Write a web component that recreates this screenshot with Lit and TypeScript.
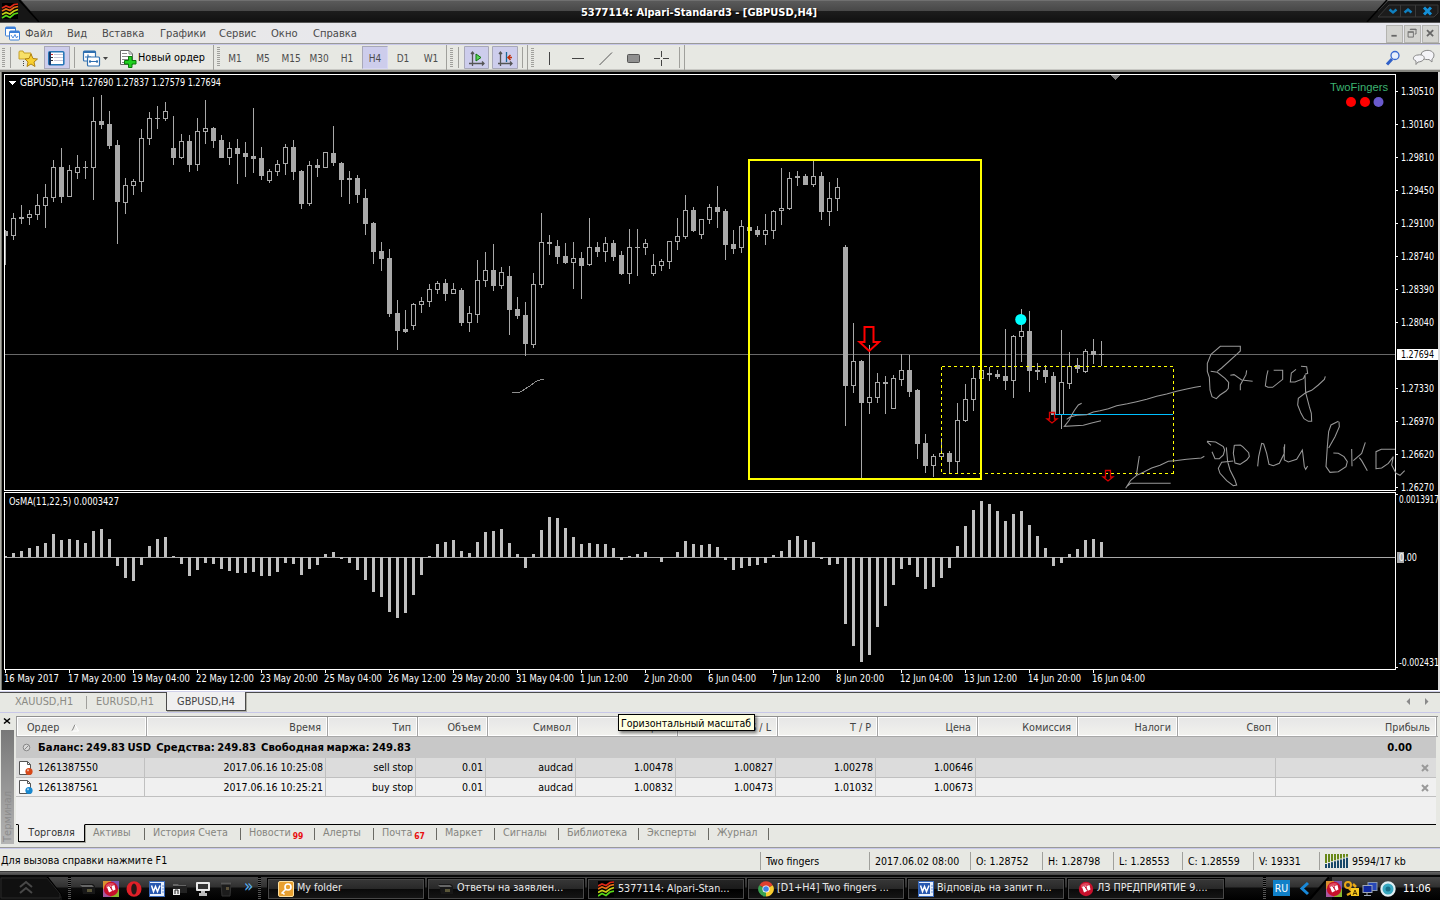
import { LitElement, html, svg, css } from 'lit';
import { customElement } from 'lit/decorators.js';
import { classMap } from 'lit/directives/class-map.js';
import { styleMap } from 'lit/directives/style-map.js';

// [high, low, body top, body bottom, filled]
const CANDLES: number[][] = [
  [230, 265, 231, 236, 1], [213, 240, 218, 236, 0], [205, 224, 217, 219, 1], [210, 225, 214, 218, 0],
  [194, 220, 205, 215, 0], [184, 228, 197, 206, 0], [160, 202, 167, 198, 0], [148, 203, 167, 197, 1],
  [165, 197, 170, 197, 0], [155, 179, 167, 173, 0], [161, 179, 167, 168, 1], [97, 200, 121, 168, 0],
  [95, 129, 121, 125, 1], [111, 149, 124, 146, 1], [140, 244, 145, 202, 1], [178, 214, 185, 203, 0],
  [179, 195, 181, 186, 0], [129, 192, 138, 182, 0], [112, 145, 118, 139, 0], [106, 129, 118, 119, 1],
  [102, 121, 111, 119, 0], [116, 165, 148, 158, 1], [134, 159, 141, 158, 0], [135, 172, 141, 165, 1],
  [118, 171, 131, 165, 0], [100, 144, 128, 132, 0], [127, 148, 128, 141, 1], [135, 158, 140, 158, 1],
  [142, 165, 148, 158, 0], [139, 184, 148, 154, 1], [142, 177, 153, 157, 1], [108, 173, 156, 159, 1],
  [147, 180, 158, 176, 1], [169, 183, 171, 181, 0], [160, 176, 164, 172, 0], [144, 175, 147, 164, 0],
  [140, 180, 147, 172, 1], [170, 209, 171, 204, 1], [161, 206, 165, 204, 0], [159, 177, 165, 168, 1],
  [152, 168, 152, 168, 0], [126, 166, 153, 163, 1], [162, 197, 163, 180, 1], [171, 204, 178, 180, 1],
  [175, 203, 178, 195, 1], [189, 235, 198, 224, 1], [222, 264, 223, 252, 1], [242, 271, 251, 259, 1],
  [249, 317, 258, 314, 1], [300, 350, 313, 331, 1], [310, 333, 329, 332, 1], [303, 330, 304, 326, 0],
  [297, 313, 301, 305, 0], [284, 307, 289, 302, 0], [281, 294, 283, 290, 0], [279, 301, 283, 294, 1],
  [283, 294, 289, 294, 0], [288, 326, 290, 323, 1], [306, 332, 313, 323, 0], [260, 323, 280, 315, 0],
  [252, 287, 270, 281, 0], [244, 291, 270, 286, 1], [267, 289, 272, 286, 0], [266, 335, 276, 310, 1],
  [297, 319, 309, 316, 1], [302, 356, 315, 344, 1], [273, 348, 284, 345, 0], [213, 288, 242, 285, 0],
  [235, 255, 242, 244, 1], [240, 264, 246, 257, 1], [243, 264, 256, 263, 1], [242, 289, 258, 263, 0],
  [252, 299, 258, 266, 1], [218, 266, 247, 265, 0], [242, 257, 247, 252, 1], [237, 262, 243, 252, 0],
  [240, 261, 243, 257, 1], [251, 275, 255, 274, 1], [229, 284, 247, 274, 0], [229, 276, 247, 248, 1],
  [239, 255, 243, 248, 0], [254, 276, 265, 274, 0], [259, 271, 261, 266, 0], [241, 269, 241, 262, 0],
  [218, 250, 236, 242, 0], [195, 239, 210, 237, 0], [207, 232, 210, 231, 1], [219, 239, 219, 235, 0],
  [204, 224, 207, 220, 0], [186, 228, 207, 212, 1], [209, 260, 211, 245, 1], [230, 254, 244, 249, 1],
  [220, 253, 226, 248, 0], [227, 231, 227, 231, 1], [226, 237, 230, 235, 1], [214, 245, 230, 235, 0],
  [210, 239, 211, 231, 0], [168, 225, 208, 211, 0], [172, 210, 178, 209, 0], [171, 186, 176, 178, 1],
  [174, 185, 176, 185, 1], [161, 187, 176, 185, 0], [172, 220, 176, 212, 1], [182, 226, 198, 212, 0],
  [178, 211, 187, 199, 0], [245, 426, 247, 386, 1], [323, 393, 361, 386, 0], [360, 478, 361, 403, 1],
  [345, 414, 397, 403, 0], [373, 403, 382, 398, 0], [376, 414, 382, 384, 1], [375, 409, 378, 409, 0],
  [354, 386, 370, 380, 0], [355, 397, 370, 392, 1], [389, 459, 390, 444, 1], [434, 473, 443, 466, 1],
  [454, 477, 456, 466, 0], [438, 460, 453, 457, 0], [451, 473, 453, 462, 1], [403, 474, 420, 462, 0],
  [384, 422, 399, 421, 0], [367, 411, 378, 400, 0], [370, 379, 370, 379, 0], [367, 381, 373, 375, 1],
  [370, 379, 374, 377, 1], [329, 390, 376, 381, 1], [335, 398, 336, 381, 0], [309, 362, 331, 337, 0],
  [311, 392, 331, 371, 1], [363, 380, 370, 372, 1], [365, 383, 370, 377, 1], [372, 415, 376, 415, 1],
  [330, 429, 382, 415, 0], [352, 389, 366, 384, 0], [358, 373, 365, 369, 1], [349, 373, 351, 372, 0],
  [339, 364, 351, 355, 1], [341, 366, 354, 355, 1],
];

// outer edge of every histogram bar, the zero line is at 557
const OSMA = [
  556, 553, 551, 548, 546, 543, 534, 540, 539, 540, 543, 531, 529, 539, 566, 578, 581, 565, 546, 539,
  537, 556, 564, 576, 570, 563, 564, 569, 571, 573, 573, 572, 576, 576, 572, 563, 564, 575, 569, 565,
  554, 552, 559, 563, 570, 580, 592, 597, 612, 618, 613, 595, 575, 556, 544, 542, 540, 551, 553, 542,
  532, 531, 529, 543, 554, 568, 554, 530, 517, 518, 528, 537, 544, 543, 544, 544, 548, 560, 556, 554,
  552, 557, 562, 557, 552, 541, 544, 545, 544, 547, 560, 570, 568, 566, 565, 563, 555, 551, 540, 536,
  540, 542, 559, 565, 564, 624, 646, 662, 655, 627, 606, 585, 569, 565, 577, 589, 587, 578, 568, 546,
  526, 510, 501, 504, 511, 521, 514, 511, 525, 536, 548, 566, 563, 554, 549, 540, 539, 542,
];

const PRICES: [string, number][] = [
  ['1.30510', 91], ['1.30160', 124], ['1.29810', 157], ['1.29450', 190], ['1.29100', 223],
  ['1.28740', 256], ['1.28390', 289], ['1.28040', 322], ['1.27330', 388], ['1.26970', 421],
  ['1.26620', 454], ['1.26270', 487],
];

const DATES: [string, number][] = [
  ['16 May 2017', 55], ['17 May 20:00', 58], ['19 May 04:00', 58], ['22 May 12:00', 58],
  ['23 May 20:00', 58], ['25 May 04:00', 58], ['26 May 12:00', 58], ['29 May 20:00', 58],
  ['31 May 04:00', 58], ['1 Jun 12:00', 48], ['2 Jun 20:00', 48], ['6 Jun 04:00', 48],
  ['7 Jun 12:00', 48], ['8 Jun 20:00', 48], ['12 Jun 04:00', 53], ['13 Jun 12:00', 53],
  ['14 Jun 20:00', 53], ['16 Jun 04:00', 53],
];

const label = (x: number, y: number, width: number, text: string, cls = '') => svg`
  <text class="label ${cls}" x=${x} y=${y} textLength=${width} lengthAdjust="spacingAndGlyphs">${text}</text>
`;

@customElement('price-chart')
export class PriceChart extends LitElement {
  static styles = css`
    :host {
      display: block;
      height: 618px;
      background: #000;
    }
    svg {
      display: block;
    }
    .label {
      font-family: 'DejaVu Sans Condensed', 'DejaVu Sans', sans-serif;
      font-stretch: condensed;
      font-size: 9.8px;
      fill: #fff;
    }
    .label.dark {
      fill: #000;
    }
    .label.name {
      font-family: 'Liberation Sans', Arial, sans-serif;
      font-size: 11.5px;
      fill: #3cb371;
    }
    .crisp {
      shape-rendering: crispEdges;
    }
    .ink {
      fill: none;
      stroke: #989898;
      stroke-width: 3.2;
      shape-rendering: geometricPrecision;
    }
  `;

  private candle([high, low, top, bottom, filled]: number[], i: number) {
    const x = 5 + i * 8;
    const left = i === 0 ? x : x - 2;
    return svg`
      <rect x=${x} y=${high} width="1" height=${low - high} fill="#a9a9a9" />
      <rect x=${left} y=${top} width=${x + 3 - left} height=${bottom - top} fill="#a9a9a9" />
      ${filled ? '' : svg`<rect x=${x - 1} y=${top + 1} width="3" height=${bottom - top - 2} fill="#000" />`}
    `;
  }

  private bar(edge: number, i: number) {
    return svg`<rect x=${i === 0 ? 5 : 4 + i * 8} y=${Math.min(edge, 557)} width=${i === 0 ? 2 : 3}
      height=${Math.abs(edge - 557)} fill="#c0c0c0" />`;
  }

  render() {
    return html`
      <svg width="1440" height="618" viewBox="0 72 1440 618">
        <g class="crisp">
          <rect x="0" y="72" width="1" height="618" fill="#b0b0a8" />
          <rect x="1" y="72" width="1" height="618" fill="#77776f" />
          <rect x="1438" y="72" width="2" height="618" fill="#dcdcdc" />
          <rect x="5" y="354" width="1391" height="1" fill="#696969" />
          ${CANDLES.map((c, i) => this.candle(c, i))}
          <rect x="5" y="557" width="1391" height="1" fill="#a9a9a9" />
          ${OSMA.map((v, i) => this.bar(v, i))}
          <path d="M4.5 490.5V74.5H1395.5V490.5ZM4.5 669.5V492.5H1395.5V669.5Z" fill="none" stroke="#fff" />
          ${PRICES.map(([, y]) => svg`<rect x="1396" y=${y} width="2" height="1" fill="#fff" />`)}
          ${DATES.map((_, i) => svg`<rect x=${5 + i * 64} y="670" width="1" height="3" fill="#fff" />`)}
          <rect x="1396" y="494" width="2" height="1" fill="#fff" />
          <rect x="1396" y="667" width="2" height="1" fill="#fff" />
          <path d="M1111 75H1120L1115.5 80Z" fill="#808080" />
          <path d="M8 81H16L12 85Z" fill="#fff" />
          <rect x="749" y="160" width="232" height="319" fill="none" stroke="#ff0" stroke-width="2" />
          <rect x="1053" y="414" width="120" height="1" fill="#00bfff" />
          <path
            d="M941.5 366.5H1173.5V473.5M941.5 366.5V473.5H1173.5"
            fill="none" stroke="#ff0" stroke-dasharray="3 3"
          />
          <g class="ink" transform="translate(1040 290) scale(0.33333)">
            <path d="M483 289L465 292L440 297L410 304L380 312L350 319L320 328L290 335L262 341L230 347L205 356L180 362L160 366L140 374L110 376L90 381L80 388" />
            <path d="M125 340L115 345L104 360L95 375L88 390L73 409L130 406L155 399L183 392" />
            <path d="M532 244L545 234L590 193L601 183V169H541L513 193L502 220V244L508 262L510 300L516 320L529 326L540 315L558 303L565 295L566 277L555 265L532 247L512 244" />
            <path d="M571 256L582 254L605 270L638 274M620 241L618 254L601 285V301" />
            <path d="M684 241L680 258L676 288L684 292H698L728 268V241H701" />
            <path d="M783 229L800 230L803 250L795 253M768 238L754 249L751 276H765L790 266L795 255L797 308L775 325L773 345L783 370L792 386L805 394H815L814 370L808 350L797 308L815 301L835 285L853 268L856 259" />
            <path d="M493 499L484 504L440 508L405 512L385 514L360 526L335 534L310 547L290 556L272 571L257 595M298 498L293 530L289 556M262 588L272 580H392" />
            <path d="M501 454L527 456L550 470L554 480L550 495L538 506H525L516 485M501 455L513 466" />
            <path d="M559 472L563 515L570 540L585 570L590 585L580 587L560 572L540 550L535 535L545 517L580 513M583 465L580 490L585 519L600 523L620 510L628 500L626 488L608 470L601 465L583 466" />
            <path d="M653 529L656 500L665 460L671 462L680 490L687 523L700 527L718 520L733 490L734 463M732 470L733 510L745 516L770 508L787 480L789 495L793 530L797 538L803 528" />
            <path d="M895 394L873 405L866 425L862 470L858 530L870 547L895 545L918 530L922 515L912 500L895 490L880 489M897 395L898 410L885 440L866 474" />
            <path d="M935 477L936 529M976 457L965 490L940 512M958 503L965 512L982 542" />
            <path d="M1065 478H1024L1008 485V536L1025 534L1045 520L1060 500L1055 525L1068 550L1080 556L1094 542" />
          </g>
          <path
            d="M512.5 392.5L520.5 392L525 389L530 386L534 383L536 381.5L540 380L544 379.5"
            fill="none" stroke="#8e8e8e"
          />
        </g>
        <g fill="none" stroke="#f00">
          <path d="M864.5 327H873.5V342H879L869.2 351L859.5 342H864.5Z" stroke-width="2" />
          <path d="M1049.5 412.5H1054.5V419H1057L1052 423L1047 419H1049.5Z" stroke="#d80000" stroke-width="1.3" />
          <path d="M1105.5 470.5H1110.5V477H1113L1108 481L1103 477H1105.5Z" stroke="#d80000" stroke-width="1.3" />
        </g>
        <circle cx="1020.8" cy="319.5" r="5.6" fill="#0ff" />
        <circle cx="1351" cy="102" r="5" fill="#f00" />
        <circle cx="1365" cy="102" r="5" fill="#f00" />
        <circle cx="1378.5" cy="102" r="5" fill="#6a5acd" />
        ${label(20, 86, 54, 'GBPUSD,H4')} ${label(80, 86, 141, '1.27690 1.27837 1.27579 1.27694')}
        ${label(1330, 91, 58, 'TwoFingers', 'name')} ${label(9, 505, 110, 'OsMA(11,22,5) 0.0003427')}
        ${PRICES.map(([text, y]) => label(1401, y + 4, 33, text))}
        <rect x="1397" y="349" width="41" height="11" fill="#fff" />
        ${label(1401, 358, 33, '1.27694', 'dark')}
        <rect x="1397" y="552" width="7" height="11" fill="#a9a9a9" />
        ${label(1399, 503, 40, '0.0013917')} ${label(1399, 561, 18, '0.00')}
        ${label(1399, 666, 40, '-0.002431')}
        ${DATES.map(([text, width], i) => label(4 + i * 64, 682, width, text))}
      </svg>
    `;
  }
}

const logo = html`
  <svg width="16" height="16" viewBox="0 0 16 16">
    <rect width="16" height="16" fill="#000" />
    <g fill="none" stroke-width="1.7">
      <path d="M0 5L4 3L8 4.5L12 1.5L16 1" stroke="#e02818" />
      <path d="M0 8L4 6L8 7.5L12 4.5L16 3.5" stroke="#e87018" />
      <path d="M0 11.5L4 9.5L8 11L12 8L16 6.5" stroke="#c8d018" />
      <path d="M0 15L4 12.5L8 14.5L12 11L16 10" stroke="#58d818" />
    </g>
  </svg>
`;

const redBall = (square: boolean) => html`
  <svg width="16" height="16" viewBox="0 0 16 16">
    ${square
      ? svg`<path d="M0 0H8V8H0Z" fill="#d89030" /><path d="M8 0H16V8H8Z" fill="#7858b0" />
          <path d="M0 8H8V16H0Z" fill="#a858a0" /><path d="M8 8H16V16H8Z" fill="#88b830" />`
      : ''}
    <circle cx="8" cy="8" r="7.2" fill="#c8102c" />
    <path d="M3 4Q7 .5 12 3Q8 5 3 7Z" fill="#f07080" opacity=".6" />
    <path d="M4 6L7.5 4.5L9 10L6 11.5ZM8.5 5L11.5 4L12.5 8.5L9.5 10Z" fill="#fff" />
    <path d="M6.5 5L9.5 9.5" stroke="#c8102c" />
  </svg>
`;

const wordIcon = html`
  <svg width="16" height="16" viewBox="0 0 16 16">
    <rect x=".5" y=".5" width="15" height="15" fill="#e8f0fc" stroke="#3868b8" />
    <rect x="1" y="2" width="11" height="11" fill="#2858b0" />
    <path d="M2.5 4.5L4.5 10.5L6.5 5.5L8.5 10.5L11 4.5" fill="none" stroke="#fff" stroke-width="1.5" />
    <path d="M13 5H15M13 8H15M13 11H15" stroke="#6890d0" />
  </svg>
`;

const darkFolder = html`
  <svg width="16" height="16" viewBox="0 0 16 16">
    <path d="M1 3H13L15 5V13H3Z" fill="#181818" />
    <path d="M0 4H12L14 6H2Z" fill="#666" />
    <rect x="7" y="8" width="5" height="3" fill="#5a5638" />
  </svg>
`;

const TASK_ICONS: Record<string, unknown> = {
  key: html`<svg width="16" height="16" viewBox="0 0 16 16">
    <rect x=".5" y=".5" width="15" height="15" rx="1.5" fill="#e8a030" stroke="#fce0a0" />
    <circle cx="10" cy="6" r="3" fill="none" stroke="#fff" stroke-width="1.6" />
    <path d="M8 8L3.5 12.5M4.5 11.5L6.5 13.5" stroke="#fff" stroke-width="1.6" />
  </svg>`,
  folder: darkFolder,
  logo,
  chrome: html`<svg width="16" height="16" viewBox="0 0 16 16">
    <path d="M8 8L1.4 4.2A7.5 7.5 0 0 1 14.6 4.2Z" fill="#e04030" />
    <path d="M8 8L14.8 4.2A7.5 7.5 0 0 1 8 15.5Z" fill="#f8cc30" />
    <path d="M8 8V15.5A7.5 7.5 0 0 1 1.2 4.2Z" fill="#38a050" />
    <circle cx="8" cy="8" r="3.6" fill="#fff" />
    <circle cx="8" cy="8" r="2.8" fill="#4080e8" />
  </svg>`,
  word: wordIcon,
  ball: redBall(false),
};

const MENU: [string, number][] = [
  ['Файл', 42], ['Вид', 35], ['Вставка', 58], ['Графики', 59], ['Сервис', 52], ['Окно', 42], ['Справка', 50],
];

const COLUMNS: [string, number][] = [
  ['Время', 181], ['Тип', 90], ['Объем', 70], ['Символ', 90], ['Цена', 100], ['S / L', 100], ['T / P', 100],
  ['Цена', 100], ['Комиссия', 100], ['Налоги', 100], ['Своп', 100], ['Прибыль', 159],
];

const ORDERS = [
  { color: '#d84818', cells: ['1261387550', '2017.06.16 10:25:08', 'sell stop', '0.01', 'audcad', '1.00478', '1.00827', '1.00278', '1.00646'] },
  { color: '#1888d0', cells: ['1261387561', '2017.06.16 10:25:21', 'buy stop', '0.01', 'audcad', '1.00832', '1.00473', '1.01032', '1.00673'] },
];

const TABS: [string, number, string?][] = [
  ['Активы', 60], ['История Счета', 96], ['Новости', 74, '99'], ['Алерты', 59], ['Почта', 63, '67'],
  ['Маркет', 58], ['Сигналы', 64], ['Библиотека', 80], ['Эксперты', 70], ['Журнал', 60],
];

const STATUS: [string, number][] = [
  ['Two fingers', 109], ['2017.06.02 08:00', 101], ['O: 1.28752', 72], ['H: 1.28798', 71],
  ['L: 1.28553', 69], ['C: 1.28559', 71], ['V: 19331', 66],
];

const TASKS: [string, string][] = [
  ['key', 'My folder'], ['folder', 'Ответы на заявлен...'], ['logo', '5377114: Alpari-Stan...'],
  ['chrome', '[D1+H4] Two fingers ...'], ['word', 'Відповідь на запит п...'], ['ball', 'ЛЗ ПРЕДПРИЯТИЕ 9....'],
];

@customElement('app-root')
export class AppRoot extends LitElement {
  static styles = css`
    :host {
      display: block;
      width: 1440px;
      height: 900px;
      overflow: hidden;
      background: #e7e8e3;
      color: #000;
      font-family: 'DejaVu Sans Condensed', 'DejaVu Sans', sans-serif;
      font-stretch: condensed;
      font-size: 10.5px;
      line-height: 14px;
      white-space: nowrap;
    }
    * {
      box-sizing: border-box;
    }
    svg {
      display: block;
      flex: none;
    }

    .title {
      display: flex;
      justify-content: space-between;
      height: 23px;
      background: linear-gradient(#707070 0 1px, #5a5a5a 1px, #484848 11px, #1d1d1d 11px, #111 22px, #555 22px);
    }
    .title__text {
      color: #fff;
      font-weight: bold;
      font-size: 11px;
      line-height: 25px;
      margin-left: -14px;
      text-shadow: 1px 1px 1px #000;
    }

    .menu {
      display: flex;
      align-items: center;
      height: 22px;
      padding-left: 5px;
      background: linear-gradient(90deg, #e9e8e0, #e8e8ee 370px);
      border-bottom: 1px solid #c8c8e8;
      box-shadow: inset 0 -1px #9a9a98;
      color: #4a4a4a;
    }
    .menu__items {
      display: flex;
      flex: 1;
      padding-left: 5px;
      font-size: 11.1px;
    }
    .mdi {
      display: flex;
    }
    .mdi svg {
      background: #d4d4d0;
      border: 1px solid #b4b4b0;
      margin-right: 1px;
    }

    .toolbar {
      display: flex;
      align-items: center;
      height: 27px;
      padding-bottom: 1px;
      border-bottom: 2px solid #85857f;
      box-shadow: inset 0 -1px #c8c8c4;
      color: #4c4c4c;
    }
    .grip {
      width: 3px;
      height: 20px;
      margin-left: 3px;
      background: repeating-linear-gradient(#a0a09c 0 1px, #e7e8e3 1px 2px);
    }
    .sep {
      width: 1px;
      height: 21px;
      background: #a0a09c;
    }
    .sep.tall {
      height: 25px;
    }
    .frames {
      display: flex;
      padding: 0 1px;
    }
    .tf {
      width: 28px;
      height: 23px;
      text-align: center;
      line-height: 25px;
      font-size: 10px;
    }
    .tf.on {
      width: 26px;
      margin: 0 1px;
      line-height: 23px;
      background: #cdcdec;
      border: 1px solid #a8a8b8;
      border-right-color: #d8d8f4;
      border-bottom-color: #d8d8f4;
    }
    .neworder {
      font-size: 10.9px;
    }
    .tools-end {
      margin-left: auto;
    }

    .charttabs {
      display: flex;
      height: 23px;
      background: linear-gradient(#fff 0 1px, #d0d0ea 1px 2px, #4a4a4a 2px 3px, #e7e8e3 3px 22px, #c8c8e8 22px);
      padding: 2px 8px 0 2px;
      color: #8a8a84;
      font-size: 10.9px;
      line-height: 19px;
    }
    .charttabs span {
      width: 84px;
      text-align: center;
    }
    .charttabs .sep {
      height: 13px;
      margin-top: 4px;
    }
    .charttabs .second {
      width: 76px;
      margin-right: 3px;
    }
    .charttabs .charttabs__on {
      width: 80px;
      height: 19px;
      background: #f0f0f0;
      border: 1px solid #4a4a4a;
      border-top: 0;
      box-shadow: 1px 1px #b0b0a8;
      color: #444;
    }
    .charttabs svg {
      margin-left: auto;
      margin-top: 5px;
    }

    .terminal {
      position: relative;
      display: flex;
      height: 134px;
      background: #e7e8e3;
    }
    .side {
      width: 16px;
      padding: 4px 1px 2px;
    }
    .side__bar {
      margin-top: 5px;
      width: 13px;
      height: 114px;
      color: #8c8c8c;
      font-size: 11px;
      line-height: 13px;
      writing-mode: vertical-rl;
      transform: rotate(180deg);
      padding-top: 2px;
      background: linear-gradient(#b4b4b4, #787878);
    }
    .panel {
      width: 1422px;
      padding-top: 3px;
    }
    .head {
      display: flex;
      height: 21px;
      border-top: 1px solid #8f8f8f;
      border-bottom: 1px solid #a8a8a8;
      border-left: 1px solid #a0a0a0;
      color: #444;
      font-size: 10.7px;
      line-height: 19px;
    }
    .head div {
      flex: none;
      text-align: right;
      padding: 1px 6px 0 0;
      border-right: 1px solid #a4a4a4;
      box-shadow: inset 1px 1px #fff, inset -1px -1px #fff;
      background: linear-gradient(#e6e6e6, #f2f2ee);
    }
    .head .order {
      display: flex;
      text-align: left;
      width: 130px;
      padding-left: 10px;
    }
    .head .order svg {
      margin: 6px 0 0 12px;
    }
    .balance {
      display: flex;
      align-items: center;
      width: 1420px;
      height: 21px;
      background: #c8c8c8;
      font-weight: bold;
      font-size: 11.2px;
      word-spacing: -1px;
      padding-left: 6px;
    }
    .balance svg {
      margin-right: 7px;
    }
    .balance b {
      margin: 0 24px 0 auto;
    }
    .row {
      display: flex;
      width: 1420px;
      height: 20px;
      background: #dcdcdc;
      border-bottom: 1px solid #c0c0c0;
      line-height: 19px;
    }
    .row.light {
      height: 19px;
      background: #f0f0f0;
    }
    .row > div {
      text-align: right;
      padding-right: 2px;
      border-right: 1px solid #c0c0c0;
    }
    .row .ticket {
      display: flex;
      align-items: center;
      gap: 5px;
      width: 129px;
      padding-left: 3px;
    }
    .row .empty {
      width: 300px;
    }
    .row > svg {
      margin: 6px 7px 0 auto;
    }
    .blank {
      width: 1420px;
      height: 28px;
      background: #f0f0f0;
      border-bottom: 1px solid #000;
    }
    .tabs {
      display: flex;
      align-items: center;
      height: 18px;
      color: #85857f;
      padding-left: 2px;
      font-size: 10.7px;
    }
    .tabs__on {
      align-self: flex-start;
      width: 67px;
      height: 18px;
      margin-top: -1px;
      text-align: center;
      line-height: 16px;
      color: #333;
      background: #f0f0f0;
      border: 1px solid #000;
      border-top-color: #f0f0f0;
      box-shadow: 1px 1px #a8a8a0;
    }
    .tab {
      height: 12px;
      line-height: 10px;
      padding-left: 8px;
      border-right: 1px solid #6a6a64;
    }
    .tab sub {
      color: #e81010;
      font-size: 8.5px;
      font-weight: bold;
      line-height: 0;
      margin-left: 2px;
    }
    .tooltip {
      position: absolute;
      left: 618px;
      top: 1px;
      width: 137px;
      height: 17px;
      padding-left: 2px;
      background: #ffffe1;
      border: 1px solid #000;
      box-shadow: 2px 2px 3px rgba(0, 0, 0, 0.5);
      line-height: 16px;
    }

    .status {
      display: flex;
      align-items: center;
      height: 24px;
      border-top: 1px solid #9a9a98;
      box-shadow: inset 0 1px #c8c8ea;
      padding: 2px 0 0 1px;
    }
    .status__hint {
      width: 759px;
      font-size: 10.7px;
    }
    .status__cell {
      height: 18px;
      line-height: 18px;
      padding-left: 5px;
      border-left: 1px solid #a0a09c;
    }
    .status__net {
      display: flex;
      align-items: center;
      gap: 4px;
    }

    .taskbar {
      display: flex;
      height: 29px;
      background: linear-gradient(#3a3a3a 0 1px, #666 1px, #444 4px, #080808 4px 6px, #484848 6px, #303030 16px, #0c0c0c 17px, #000);
      color: #e8e8e8;
      padding-top: 6px;
    }
    .start {
      width: 62px;
      margin-right: 6px;
    }
    .dots {
      width: 3px;
      background: repeating-linear-gradient(#000 0 1px, #555 1px 2px);
    }
    .quick {
      display: flex;
      align-items: center;
      gap: 7px;
      width: 187px;
      padding-left: 9px;
    }
    .quick span {
      color: #58b0f0;
      font-size: 17px;
      line-height: 12px;
      padding-bottom: 5px;
      margin-left: 3px;
    }
    .tasks {
      display: flex;
      width: 1002px;
      padding: 1px 0 0 6px;
    }
    .task {
      display: flex;
      align-items: center;
      gap: 3px;
      width: 158px;
      height: 22px;
      margin-right: 2px;
      padding-left: 10px;
      border: 1px solid #000;
      box-shadow: inset 0 0 0 1px #484848;
      background: linear-gradient(#383838, #282828 50%, #0a0a0a 50%, #161616);
      font-size: 10.7px;
    }
    .task span {
      padding-bottom: 2px;
    }
    .task.on {
      background: linear-gradient(#262626, #1a1a1a 50%, #000 50%, #0a0a0a);
    }
    .task.on span {
      padding: 0 0 0 1px;
    }
    .lang {
      width: 17px;
      height: 16px;
      margin: 3px 0 0 7px;
      background: #1080c8;
      color: #fff;
      text-align: center;
      line-height: 17px;
    }
    .fold {
      margin-left: 8px;
    }
    .tray {
      display: flex;
      align-items: center;
      gap: 2px;
      margin-left: -6px;
    }
    .clock {
      padding-left: 5px;
      color: #fff;
      font-size: 11px;
      letter-spacing: -0.2px;
    }
  `;

  private renderTitle() {
    return html`
      <div class="title">
        <svg width="46" height="22" viewBox="0 0 46 22">
          <path d="M0 0H21L40 22H0Z" fill="#161616" />
          <path d="M19 0L39 22" stroke="#000" stroke-width="1.5" />
          <g transform="translate(2 3)">
            <rect width="16" height="16" fill="#000" />
            <g fill="none" stroke-width="1.7">
              <path d="M0 5L4 3L8 4.5L12 1.5L16 1" stroke="#e02818" />
              <path d="M0 8L4 6L8 7.5L12 4.5L16 3.5" stroke="#e87018" />
              <path d="M0 11.5L4 9.5L8 11L12 8L16 6.5" stroke="#c8d018" />
              <path d="M0 15L4 12.5L8 14.5L12 11L16 10" stroke="#58d818" />
            </g>
          </g>
        </svg>
        <span class="title__text">5377114: Alpari-Standard3 - [GBPUSD,H4]</span>
        <svg width="74" height="22" viewBox="1366 0 74 22">
          <path d="M1368 22L1388 1H1440V22Z" fill="#151515" />
          <path d="M1367 22L1387 0" stroke="#000" stroke-width="1.5" />
          <path d="M1378 17L1389 5H1438V13L1434 17ZM1400.5 5V17M1415.5 5V17" fill="#1c1c1c" stroke="#3a3a3a" />
          <path
            d="M1389.5 9.5L1393 12.5L1396.5 9.5M1404.5 12.5L1408 9.5L1411.5 12.5"
            fill="none" stroke="#1080c0" stroke-width="2.4"
          />
          <path d="M1424 7.5L1431 14.5M1431 7.5L1424 14.5" stroke="#1490d8" stroke-width="3" />
        </svg>
      </div>
    `;
  }

  private renderMenu() {
    return html`
      <div class="menu">
        <svg width="15" height="15" viewBox="0 0 15 15" fill="#fff" stroke="#3c80d8">
          <rect x=".5" y="1" width="10" height="9" rx="1" />
          <path d="M1 2H10" stroke-width="2" />
          <rect x="4.5" y="5" width="10" height="9" rx="1" />
          <path d="M5 6H14" stroke-width="2" />
          <path d="M6 9L8 12L10 8.5L11.5 12L13 10" fill="none" stroke-width=".9" />
        </svg>
        <div class="menu__items">
          ${MENU.map(([text, width]) => html`<span style=${styleMap({ width: `${width}px` })}>${text}</span>`)}
        </div>
        <div class="mdi">
          <svg width="17" height="18" viewBox="0 0 17 18"><path d="M5 11H11" stroke="#666" stroke-width="2" /></svg>
          <svg width="17" height="18" viewBox="0 0 17 18" fill="none" stroke="#666">
            <path d="M3.5 7V12.5H9.5V7ZM3 6.5H10M6 4.5V3.5H12.5V9H11M6 4H13" />
          </svg>
          <svg width="17" height="18" viewBox="0 0 17 18">
            <path d="M4.5 4.5L11.5 11.5M11.5 4.5L4.5 11.5" stroke="#666" stroke-width="2" />
          </svg>
        </div>
      </div>
    `;
  }

  private renderToolbar() {
    const frames = ['M1', 'M5', 'M15', 'M30', 'H1', 'H4', 'D1', 'W1'];
    return html`
      <div class="toolbar">
        <svg width="213" height="25" viewBox="0 45 213 25">
          <path d="M3.5 48V68" stroke="#a0a09c" stroke-width="3" stroke-dasharray="1 1" />
          <path d="M10.5 47V68M74.5 47V68" stroke="#a0a09c" />
          <path d="M19 52Q19 51 20 51H23L24 53H31V59H19Z" fill="#f8e068" stroke="#c09820" stroke-width=".9" />
          <path d="M23.5 61V66" stroke="#444" stroke-dasharray="1 1" />
          <path d="M31 54L33 58.5L37.5 59L34 62L35 66.5L31 64L27 66.5L28 62L25 59L29 58.5Z" fill="#f8d030" stroke="#a87808" stroke-width=".9" />
          <rect x="44.5" y="46.5" width="25" height="22" fill="#cdcdec" stroke="#a8a8b8" />
          <rect x="48.8" y="51.8" width="15" height="13" rx="1" fill="#fff" stroke="#2878b8" stroke-width="1.6" />
          <path d="M50 52V65" stroke="#183868" stroke-width="2" />
          <path d="M54 54.5H63M54 57.5H63M54 60.5H63" stroke="#c8c8d8" />
          <path d="M51 54.5H53" stroke="#d02020" />
          <path d="M51 57.5H53M51 60.5H53" stroke="#333" />
          <g fill="#fff" stroke="#3070b0" stroke-width="1.2">
            <rect x="83.5" y="51" width="12" height="10" rx="1" />
            <path d="M84 52H95" stroke-width="2" />
            <path d="M85 57H91M88 54.5V59" />
            <rect x="87.5" y="57" width="12" height="9" rx="1" />
            <path d="M89 61.5H98M90 60V63M97 60V63" />
          </g>
          <path d="M103 57H108L105.5 60Z" fill="#444" />
          <path d="M120.5 50.5H129L132.5 54V64.5H120.5Z" fill="#fff" stroke="#666" />
          <path d="M129 50.5V54H132.5M122 53.5H127M122 56.5H130M122 59.5H128M122 62.5H127" fill="none" stroke="#888" />
          <path d="M128.5 56.5H132V60.5H136V64H132V67.5H128.5V64H124.5V60.5H128.5Z" fill="#20d020" stroke="#087808" />
          <text class="neworder" x="138" y="61" textLength="67" lengthAdjust="spacingAndGlyphs">Новый ордер</text>
        </svg>
        <div class="sep tall"></div>
        <div class="grip"></div>
        <div class="frames">
          ${frames.map((f) => html`<div class=${classMap({ tf: true, on: f === 'H4' })}>${f}</div>`)}
        </div>
        <svg width="240" height="25" viewBox="446 45 240 25" fill="none">
          <path d="M446.5 45V70M458.5 47V68M522.5 47V68M527.5 45V70M679.5 47V68M684.5 45V70" stroke="#a0a09c" />
          <path d="M451.5 48V68M532.5 48V68" stroke="#a0a09c" stroke-width="3" stroke-dasharray="1 1" />
          <path d="M464.5 46.5H488.5V68.5H464.5ZM492.5 46.5H517.5V68.5H492.5Z" fill="#cdcdec" stroke="#a8a8b8" />
          <path d="M472.5 52V66M469 63.5H484M482 61.5L484 63.5L482 65.5M471 54L472.5 52L474 54" stroke="#555" stroke-width="1.3" />
          <path d="M476 54V61L481 57.5Z" fill="#58d858" stroke="#107010" />
          <path d="M500.5 52V66M498 63.5H512M510 61.5L512 63.5L510 65.5M499 54L500.5 52L502 54" stroke="#555" stroke-width="1.3" />
          <path d="M506.5 52V62" stroke="#186898" stroke-width="1.3" />
          <path d="M512 57.5H508M510.5 55L508 57.5L510.5 60" stroke="#c03008" stroke-width="1.5" />
          <path d="M549.5 52V65M572 58.5H584M654 58.5H660M663 58.5H669M661.5 51V57M661.5 60V66" stroke="#444" />
          <path d="M599.5 65L612 52.5" stroke="#555" />
          <rect x="627.5" y="54.5" width="12" height="8" rx="1" fill="#909090" stroke="#555" />
        </svg>
        <svg class="tools-end" width="60" height="25" viewBox="1380 45 60 25">
          <path d="M1392 59L1387 64.5" stroke="#3060c8" stroke-width="3" />
          <circle cx="1395" cy="55.5" r="4" fill="#e8f0fc" stroke="#3868d0" stroke-width="1.3" />
          <path d="M1424 51C1430 49 1434 52 1434 55C1434 58 1432 59 1432 59V62L1429 59.5C1424 60 1421 58 1421 55Q1421 52 1424 51Z" fill="#f4f4f8" stroke="#888" />
          <path d="M1418 55C1423 54 1425 57 1424 59C1423 61.5 1419 62 1418 62L1416 64.5L1416 61C1411 59 1414 55 1418 55Z" fill="#f4f4f8" stroke="#888" />
        </svg>
      </div>
    `;
  }

  private renderOrder(order: { color: string; cells: string[] }, i: number) {
    const widths = [129, 181, 90, 70, 90, 100, 100, 100, 100];
    return html`
      <div class=${classMap({ row: true, light: i === 1 })}>
        ${order.cells.map((text, n) =>
          n === 0
            ? html`<div class="ticket">
                <svg width="14" height="16" viewBox="0 0 14 16">
                  <path d="M.5 1.5H8.5L11.5 4.5V14.5H.5Z" fill="#fff" stroke="#555" />
                  <path d="M8.5 1.5V4.5H11.5" fill="none" stroke="#555" />
                  <circle cx="10" cy="11.5" r="3.6" fill=${order.color} />
                  <circle cx="9" cy="10.3" r="1.1" fill="#fff" opacity=".6" />
                </svg>
                ${text}
              </div>`
            : html`<div style=${styleMap({ width: `${widths[n]}px` })}>${text}</div>`
        )}
        <div class="empty"></div>
        <svg width="8" height="8" viewBox="0 0 8 8"><path d="M1 1L7 7M7 1L1 7" stroke="#999" stroke-width="2" /></svg>
      </div>
    `;
  }

  private renderTerminal() {
    return html`
      <div class="terminal">
        <div class="side">
          <svg width="12" height="8" viewBox="0 0 12 8"><path d="M3 1.5L9 6.5M9 1.5L3 6.5" stroke="#000" stroke-width="1.6" /></svg>
          <div class="side__bar">Терминал</div>
        </div>
        <div class="panel">
          <div class="head">
            <div class="order">
              Ордер<svg width="9" height="8" viewBox="0 0 9 8" fill="none">
                <path d="M1 7L4 .5" stroke="#888" /><path d="M4 .5L7.5 7H1" stroke="#fff" />
              </svg>
            </div>
            ${COLUMNS.map(([text, width]) => html`<div style=${styleMap({ width: `${width}px` })}>${text}</div>`)}
          </div>
          <div class="balance">
            <svg width="9" height="9" viewBox="0 0 9 9" fill="#d8d8d8" stroke="#888">
              <circle cx="4.5" cy="4.5" r="3.3" /><path d="M2.5 6.5L6.5 2.5" />
            </svg>
            <span>Баланс: 249.83 USD&nbsp; Средства: 249.83&nbsp; Свободная маржа: 249.83</span>
            <b>0.00</b>
          </div>
          ${ORDERS.map((o, i) => this.renderOrder(o, i))}
          <div class="blank"></div>
          <div class="tabs">
            <div class="tabs__on">Торговля</div>
            ${TABS.map(
              ([text, width, count]) =>
                html`<div class="tab" style=${styleMap({ width: `${width}px` })}>${text}${count ? html`<sub>${count}</sub>` : ''}</div>`
            )}
          </div>
        </div>
        <div class="tooltip">Горизонтальный масштаб</div>
      </div>
    `;
  }

  private renderStatus() {
    return html`
      <div class="status">
        <span class="status__hint">Для вызова справки нажмите F1</span>
        ${STATUS.map(
          ([text, width]) => html`<div class="status__cell" style=${styleMap({ width: `${width}px` })}>${text}</div>`
        )}
        <div class="status__cell status__net">
          <svg width="23" height="14" viewBox="0 0 23 14">
            ${[0, 1, 2, 3, 4, 5, 6, 7].map(
              (n) => svg`<rect x=${n * 3} y="0" width="2" height=${9 - n * 0.9} fill="#688818" />
                <rect x=${n * 3} y=${10 - n * 0.9} width="2" height=${4 + n * 0.9} fill="#184868" />`
            )}
          </svg>
          9594/17 kb
        </div>
      </div>
    `;
  }

  private renderTaskbar() {
    return html`
      <div class="taskbar">
        <svg class="start" width="62" height="23" viewBox="0 0 62 23">
          <path d="M0 0H48L62 18V23H0Z" fill="#101010" />
          <path d="M47 0L62 19" stroke="#000" stroke-width="2" />
          <path d="M1 1H47L60 17V21H1Z" fill="none" stroke="#282828" />
          <path d="M20 10L26 5L32 10M20 16L26 11L32 16" fill="none" stroke="#484848" stroke-width="2" />
        </svg>
        <div class="dots"></div>
        <div class="quick">
          ${darkFolder} ${redBall(true)}
          <svg width="16" height="16" viewBox="0 0 16 16">
            <ellipse cx="8" cy="8" rx="7.5" ry="7.8" fill="#e02028" />
            <ellipse cx="8" cy="8" rx="2.8" ry="5.6" fill="#281818" />
          </svg>
          ${wordIcon}
          <svg width="16" height="16" viewBox="0 0 16 16">
            <path d="M1 3H6L8 5H15V12H1Z" fill="#222" /><path d="M1 3H6L7 4H14V5H1Z" fill="#666" />
            <rect x="1" y="8" width="7" height="6" fill="#eee" />
            <path d="M3 9V13M6 9V13M3 9H6" stroke="#222" />
          </svg>
          <svg width="16" height="16" viewBox="0 0 16 16">
            <rect x="1" y="1" width="14" height="9" rx="1" fill="#e8e8e8" /><rect x="3" y="3" width="10" height="5" fill="#333" />
            <path d="M6 10H10V12H12V15H4V12H6Z" fill="#bbb" />
          </svg>
          <svg width="16" height="16" viewBox="0 0 16 16">
            <path d="M3 2H13L12 15H4Z" fill="#1c1c1c" stroke="#333" /><path d="M3 2.5H13" stroke="#555" stroke-width="2" />
            <rect x="8" y="6" width="3" height="3" fill="#5a5038" />
          </svg>
          <span>»</span>
        </div>
        <div class="dots"></div>
        <div class="tasks">
          ${TASKS.map(
            ([icon, text]) => html`<div class=${classMap({ task: true, on: icon === 'logo' })}>${TASK_ICONS[icon]}<span>${text}</span></div>`
          )}
        </div>
        <div class="dots"></div>
        <div class="lang">RU</div>
        <svg class="fold" width="34" height="23" viewBox="0 0 34 23">
          <path d="M12 23L32 0H34V23Z" fill="#141414" /><path d="M12 22L31 0" stroke="#000" stroke-width="2" />
          <path d="M10 6L4 11.5L10 17" fill="none" stroke="#1888d8" stroke-width="3" />
        </svg>
        <div class="tray">
          ${redBall(true)}
          <svg width="16" height="16" viewBox="0 0 16 16">
            <circle cx="4" cy="4" r="3" fill="none" stroke="#e8a818" stroke-width="2" />
            <path d="M5 7L9 11L3 14M9 3L12 6" stroke="#e8a818" stroke-width="2.5" fill="none" />
            <rect x="7" y="7" width="8" height="8" fill="#f8c820" /><path d="M9 14L11 9L13 14M9.5 12.5H12.5" stroke="#503800" fill="none" />
          </svg>
          <svg width="16" height="16" viewBox="0 0 16 16">
            <rect x="6" y="1.5" width="9" height="8" fill="#2848b8" stroke="#8898b0" />
            <rect x="1" y="4.5" width="9" height="7" fill="#1028a0" stroke="#a0a8b8" />
            <path d="M5 12V14M2 14.5H9" stroke="#a0a8b8" />
          </svg>
          <svg width="16" height="16" viewBox="0 0 16 16">
            <circle cx="8" cy="8" r="6.6" fill="#38a8c0" stroke="#e0eef2" stroke-width="2.2" /><circle cx="8" cy="8" r="2.5" fill="#187088" />
          </svg>
          <span class="clock">11:06</span>
        </div>
      </div>
    `;
  }

  render() {
    return html`
      ${this.renderTitle()} ${this.renderMenu()} ${this.renderToolbar()}
      <price-chart></price-chart>
      <div class="charttabs">
        <span>XAUUSD,H1</span>
        <div class="sep"></div>
        <span class="second">EURUSD,H1</span>
        <span class="charttabs__on">GBPUSD,H4</span>
        <svg width="28" height="10" viewBox="0 0 28 10" fill="#8a8a8a"><path d="M6 1V8L2.5 4.5ZM21 1V8L24.5 4.5Z" /></svg>
      </div>
      ${this.renderTerminal()} ${this.renderStatus()} ${this.renderTaskbar()}
    `;
  }
}
